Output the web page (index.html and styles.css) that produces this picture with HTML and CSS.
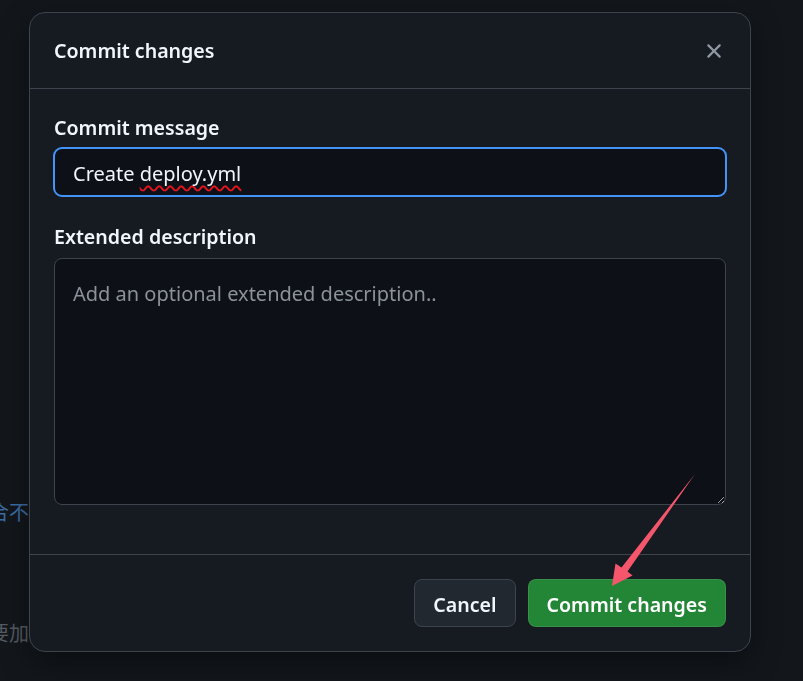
FILE: index.html
```html
<!DOCTYPE html>
<html lang="en">
<head>
<meta charset="utf-8">
<title>Commit changes</title>
<link rel="stylesheet" href="styles.css">
</head>
<body>
<div class="page">
  <p class="bg-line bg-link">合不生效的问题</p>
  <p class="bg-line bg-muted">要加上权限配置</p>
</div>
<div class="backdrop">
  <div class="dialog" role="dialog" aria-labelledby="dlg-title">
    <div class="dialog-header">
      <h1 class="dialog-title" id="dlg-title">Commit changes</h1>
      <button class="close-btn" aria-label="Close">
        <svg viewBox="0 0 16 16" width="24" height="24" aria-hidden="true"><path fill="currentColor" d="M3.72 3.72a.75.75 0 0 1 1.06 0L8 6.94l3.22-3.22a.749.749 0 0 1 1.275.326.749.749 0 0 1-.215.734L9.06 8l3.22 3.22a.749.749 0 0 1-.326 1.275.749.749 0 0 1-.734-.215L8 9.060l-3.22 3.22a.751.751 0 0 1-1.042-.018.751.751 0 0 1-.018-1.042L6.94 8 3.72 4.78a.75.75 0 0 1 0-1.06Z"/></svg>
      </button>
    </div>
    <div class="dialog-body">
      <label class="field-label">Commit message</label>
      <div class="text-input focused">Create <span class="misspelled">deploy.yml</span></div>
      <label class="field-label second">Extended description</label>
      <textarea class="text-area" placeholder="Add an optional extended description.."></textarea>
    </div>
    <div class="dialog-footer">
      <button class="btn btn-default">Cancel</button>
      <button class="btn btn-primary">Commit changes</button>
    </div>
  </div>
</div>
<svg class="annotation" width="803" height="681" viewBox="0 0 803 681" aria-hidden="true">
  <polygon fill="#f5566c" points="695,474 627.5,571.5 632.5,575.5 612,586 615.5,563.5 621.5,567.5"/>
</svg>
</body>
</html>
```
FILE: styles.css
```css
* { box-sizing: border-box; }
html, body {
  margin: 0;
  height: 681px;
  overflow: hidden;
  background: #13171c;
  color-scheme: dark;
  font-family: "Noto Sans", "Open Sans", "Noto Sans CJK SC", sans-serif;
}
.page {
  padding-top: 498px;
  margin-left: -11px;
}
.bg-line {
  margin: 0;
  font-family: "Noto Sans CJK SC", sans-serif;
  font-size: 20px;
  line-height: 28px;
  white-space: nowrap;
}
.bg-link { color: #3b6ea6; }
.bg-muted { color: #565c64; margin-top: 93px; }

.backdrop {
  position: fixed;
  inset: 0;
  padding: 12px 0 0 29px;
}
.dialog {
  width: 722px;
  height: 640px;
  border: 1px solid #3d444d;
  border-radius: 16px;
  background: #161b22;
  box-shadow: 0 10px 30px rgba(0, 0, 0, 0.45);
  display: flex;
  flex-direction: column;
  overflow: hidden;
}
.dialog-header {
  height: 76px;
  padding: 0 24px;
  border-bottom: 1px solid #3d444d;
  display: flex;
  align-items: center;
  justify-content: space-between;
  flex: none;
}
.dialog-title {
  margin: 0;
  font-size: 19.6px;
  font-weight: 600;
  color: #f0f6fc;
  line-height: 24px;
}
.close-btn {
  border: 0;
  padding: 0;
  background: none;
  color: #9198a1;
  width: 24px;
  height: 24px;
  display: flex;
}
.dialog-body {
  flex: 1;
  padding: 27px 24px 0;
  display: flex;
  flex-direction: column;
}
.field-label {
  font-size: 19.6px;
  font-weight: 600;
  line-height: 24px;
  color: #f0f6fc;
  margin-bottom: 7px;
}
.field-label.second {
  margin-top: 28px;
  margin-bottom: 9px;
}
.text-input {
  height: 50px;
  margin: 0 -1px;
  border: 2px solid #4493f8;
  border-radius: 9px;
  background: #0d1117;
  padding: 2px 18px 0;
  display: flex;
  align-items: center;
  font-size: 20px;
  color: #f0f6fc;
  white-space: pre;
}
.misspelled {
  text-decoration: underline wavy #e8141c;
  text-decoration-thickness: 1.5px;
  text-decoration-skip-ink: none;
  text-underline-offset: 4px;
}
.text-area {
  height: 247px;
  width: 100%;
  border: 1px solid #3d444d;
  border-radius: 8px;
  background: #0d1117;
  padding: 23px 18px;
  font-family: inherit;
  font-size: 20px;
  line-height: 24px;
  color: #f0f6fc;
  resize: vertical;
  outline: none;
}
.text-area::placeholder { color: #8b929b; }
.dialog-footer {
  flex: none;
  border-top: 1px solid #3d444d;
  padding: 24px;
  display: flex;
  justify-content: flex-end;
  gap: 12px;
}
.btn {
  height: 48px;
  border-radius: 8px;
  padding: 3px 18px 0;
  font-family: inherit;
  font-size: 19.6px;
  font-weight: 600;
  color: #f0f6fc;
  border: 1px solid #3d444d;
}
.btn-default { background: #212830; }
.btn-primary {
  background: #238636;
  border-color: rgba(240, 246, 252, 0.1);
  color: #ffffff;
}
.annotation {
  position: fixed;
  left: 0;
  top: 0;
  pointer-events: none;
}
```
